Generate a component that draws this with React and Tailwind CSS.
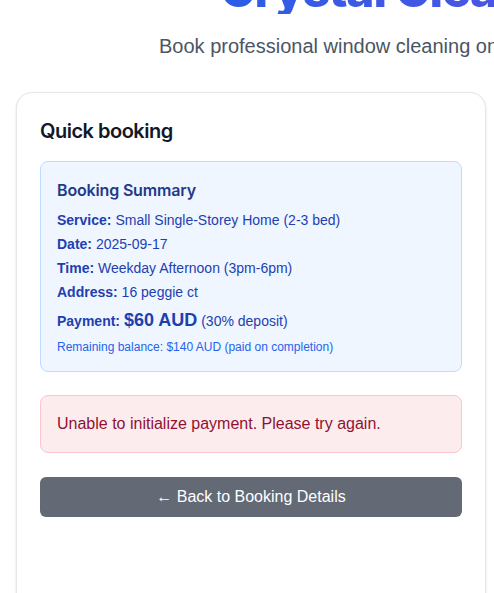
import React from 'react';

const SummaryRow = ({ label, children }) => (
  <p className="text-sm leading-5 mb-1 text-[#1e40af]">
    <span className="font-bold">{label}:</span> {children}
  </p>
);

const App = () => {
  const booking = {
    service: 'Small Single-Storey Home (2-3 bed)',
    date: '2025-09-17',
    time: 'Weekday Afternoon (3pm-6pm)',
    address: '16 peggie ct',
    deposit: 60,
    remaining: 140,
  };

  return (
    <div className="min-h-screen bg-white overflow-hidden font-['Liberation_Sans',Arial,sans-serif]">
      {/* Header, wider than the window so it gets cut on the right */}
      <div className="pl-[220px] h-[32px] overflow-hidden">
        <h1 className="block w-max whitespace-nowrap mt-[-34px] text-[48px] leading-none font-extrabold tracking-tight font-['Inter',sans-serif] bg-gradient-to-r from-[#2a5de6] to-[#5a4ee0] bg-clip-text text-transparent">
          Crystal Clear Windows
        </h1>
      </div>
      <p className="whitespace-nowrap pl-[159px] text-xl leading-7 text-[#4b5563]">
        Book professional window cleaning online in minutes
      </p>

      <div className="ml-4 mt-8 w-[470px] min-h-[520px] bg-white border border-[#e5e7eb] rounded-2xl shadow-sm pt-6 px-[23px] pb-6">
        <h2 className="text-xl leading-7 font-semibold tracking-[-0.025em] text-[#111827] mb-4 font-['Inter',sans-serif]">
          Quick booking
        </h2>

        <div className="bg-[#eff6ff] border border-[#bfdbfe] rounded-lg p-4 mb-[23px]">
          <h3 className="text-base leading-6 font-semibold tracking-[-0.01em] text-[#1e3a8a] mb-2 font-['Inter',sans-serif]">
            Booking Summary
          </h3>
          <SummaryRow label="Service">{booking.service}</SummaryRow>
          <SummaryRow label="Date">{booking.date}</SummaryRow>
          <SummaryRow label="Time">{booking.time}</SummaryRow>
          <SummaryRow label="Address">{booking.address}</SummaryRow>
          <p className="text-sm leading-7 mb-1 text-[#1e40af]">
            <span className="font-bold">Payment:</span>{' '}
            <span className="text-lg font-bold">${booking.deposit} AUD</span> (30% deposit)
          </p>
          <p className="text-xs leading-4 text-[#2563eb]">
            Remaining balance: ${booking.remaining} AUD (paid on completion)
          </p>
        </div>

        <div className="bg-[#fdecee] border border-[#fbc6cc] rounded-lg px-4 py-4 mb-6">
          <p className="text-base leading-6 text-[#8f1232]">
            Unable to initialize payment. Please try again.
          </p>
        </div>

        <button className="w-full h-10 rounded-md bg-[#636975] text-white text-base">
          ← Back to Booking Details
        </button>
      </div>
    </div>
  );
};

export default App;
